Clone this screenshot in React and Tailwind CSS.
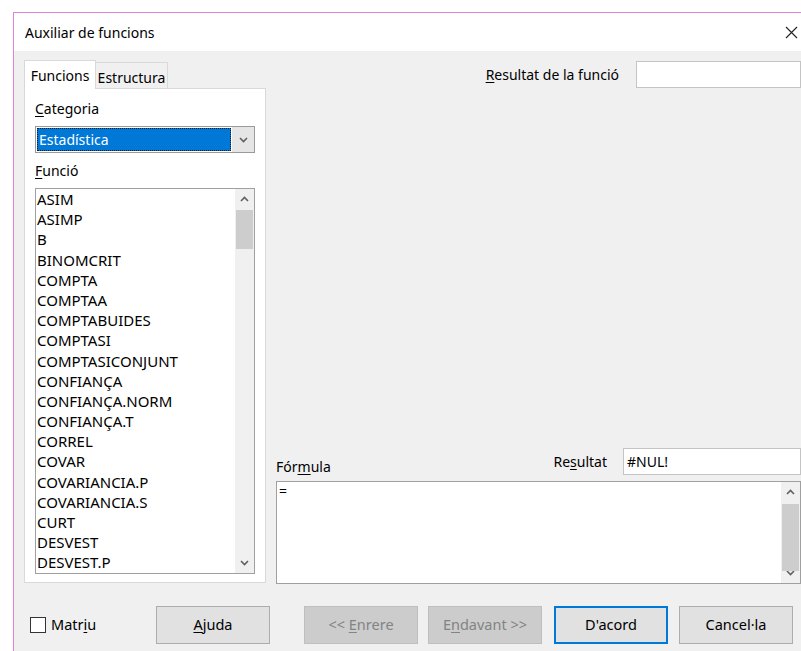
import React from "react";

const FONT = { fontFamily: '"Noto Sans", "Open Sans", "Liberation Sans", sans-serif' };

const functions = [
  "ASIM",
  "ASIMP",
  "B",
  "BINOMCRIT",
  "COMPTA",
  "COMPTAA",
  "COMPTABUIDES",
  "COMPTASI",
  "COMPTASICONJUNT",
  "CONFIANÇA",
  "CONFIANÇA.NORM",
  "CONFIANÇA.T",
  "CORREL",
  "COVAR",
  "COVARIANCIA.P",
  "COVARIANCIA.S",
  "CURT",
  "DESVEST",
  "DESVEST.P",
];

function Chevron({ up = false, className = "" }) {
  return (
    <svg width="9" height="6" viewBox="0 0 9 6" className={className}>
      <path
        d={up ? "M1 5 L4.5 1.5 L8 5" : "M1 1 L4.5 4.5 L8 1"}
        fill="none"
        stroke="#606060"
        strokeWidth="1.6"
      />
    </svg>
  );
}

function Mnemonic({ before = "", letter, after = "" }) {
  return (
    <span>
      {before}
      <span className="underline underline-offset-2">{letter}</span>
      {after}
    </span>
  );
}

function Scrollbar({ thumbTop, thumbHeight }) {
  return (
    <div className="relative flex h-full w-[19px] flex-col items-center justify-between bg-[#f0f0f0] py-[7px]">
      <Chevron up />
      <div
        className="absolute left-[1px] right-[1px] bg-[#cdcdcd]"
        style={{ top: thumbTop, height: thumbHeight }}
      />
      <Chevron />
    </div>
  );
}

function Button({ children, disabled = false, primary = false }) {
  const base = "flex h-[38px] w-[114px] shrink-0 items-center justify-center text-[14.5px]";
  if (disabled)
    return (
      <div className={`${base} border border-[#bfbfbf] bg-[#cccccc] text-[#838383]`}>{children}</div>
    );
  if (primary)
    return (
      <div className={`${base} border-2 border-[#0078d7] bg-[#e1e1e1] text-black`}>{children}</div>
    );
  return (
    <div className={`${base} border border-[#adadad] bg-[#e1e1e1] text-black`}>{children}</div>
  );
}

export default function App() {
  return (
    <div className="flex h-[651px] w-[801px] flex-col overflow-hidden bg-white text-black" style={FONT}>
      <div className="h-[12px] shrink-0 bg-white" />
      <div className="flex min-h-0 flex-1">
        <div className="w-[13px] shrink-0 bg-white" />
        <div className="flex min-w-0 flex-1 flex-col border-l border-t border-[#dc84dc]">
          {/* title bar */}
          <div className="flex h-[38px] shrink-0 items-center justify-between bg-white pl-[11px] pr-[3px]">
            <span className="text-[14px]">Auxiliar de funcions</span>
            <svg width="13" height="13" viewBox="0 0 13 13">
              <path d="M1 1 L12 12 M12 1 L1 12" stroke="#222" strokeWidth="1.1" />
            </svg>
          </div>

          {/* body */}
          <div className="flex flex-1 flex-col bg-[#f0f0f0] pl-[10px] pt-[10px]">
            <div className="flex h-[523px] gap-[10px]">
              {/* left column: tabs */}
              <div className="flex w-[242px] flex-col">
                <div className="flex h-[27px] items-end text-[14px]">
                  <div className="relative z-10 -mb-px flex h-[29px] w-[72px] items-center justify-center border border-b-0 border-[#d9d9d9] bg-white pt-[1px]">
                    Funcions
                  </div>
                  <div className="flex h-[26px] w-[72px] items-center justify-center border border-l-0 border-b-0 border-[#d9d9d9] bg-[#f0f0f0] pt-[3px]">
                    Estructura
                  </div>
                </div>
                <div className="flex h-[495px] flex-col border border-[#d9d9d9] bg-white px-[10px] pt-[10px]">
                  <div className="h-[20px] text-[14px] leading-[20px]">
                    <Mnemonic letter="C" after="ategoria" />
                  </div>
                  <div className="mt-[7px] flex h-[27px] border border-[#9a9a9a]">
                    <div className="m-px flex flex-1 items-center border border-dotted border-[#1a1a1a] bg-[#0078d7] pl-[1px] text-[14px] text-white">
                      Estadística
                    </div>
                    <div className="flex w-[22px] items-center justify-center bg-[#e5e5e5]">
                      <Chevron />
                    </div>
                  </div>
                  <div className="mt-[8px] h-[20px] text-[14px] leading-[20px]">
                    <Mnemonic letter="F" after="unció" />
                  </div>
                  <div className="mt-[7px] flex h-[386px] border border-[#a0a0a0] bg-white">
                    <div className="flex-1 overflow-hidden pl-[1px]">
                      {functions.map((f) => (
                        <div key={f} className="h-[20.2px] text-[15px] leading-[20.2px]">
                          {f}
                        </div>
                      ))}
                    </div>
                    <Scrollbar thumbTop={21} thumbHeight={39} />
                  </div>
                </div>
              </div>

              {/* right column */}
              <div className="flex min-w-0 flex-1 flex-col">
                <div className="flex h-[27px] items-center justify-end">
                  <span className="mr-[17px] text-[14px]">
                    <Mnemonic letter="R" after="esultat de la funció" />
                  </span>
                  <div className="h-[27px] w-[165px] shrink-0 border border-[#c4c4c4] bg-white" />
                </div>
                <div className="flex-1" />
                <div className="flex h-[34px] items-end">
                  <span className="mb-[4px] flex-1 text-[14px]">
                    <Mnemonic before="Fór" letter="m" after="ula" />
                  </span>
                  <div className="mt-[1px] flex items-center self-start">
                    <span className="mr-[16px] text-[14px]">
                      <Mnemonic before="Re" letter="s" after="ultat" />
                    </span>
                    <div className="flex h-[27px] w-[178px] shrink-0 items-center border border-[#c4c4c4] bg-white pl-[3px] text-[14px]">
                      #NUL!
                    </div>
                  </div>
                </div>
                <div className="flex h-[103px] border border-[#a0a0a0] bg-white">
                  <div className="flex-1 pl-[2px] text-[14px] leading-[18px]">=</div>
                  <Scrollbar thumbTop={22} thumbHeight={67} />
                </div>
              </div>
            </div>

            {/* bottom buttons */}
            <div className="mt-[22px] flex h-[38px] items-center">
              <div className="flex w-[132px] shrink-0 items-center pl-[6px]">
                <div className="h-[16px] w-[16px] border border-[#333] bg-white" />
                <span className="ml-[5px] text-[14.5px]">
                  <Mnemonic before="Matr" letter="i" after="u" />
                </span>
              </div>
              <Button>
                <Mnemonic letter="A" after="juda" />
              </Button>
              <div className="w-[34px] shrink-0" />
              <Button disabled>
                <Mnemonic before="<< " letter="E" after="nrere" />
              </Button>
              <div className="w-[10px] shrink-0" />
              <Button disabled>
                <Mnemonic before="E" letter="n" after="davant >>" />
              </Button>
              <div className="w-[12px] shrink-0" />
              <Button primary>D'acord</Button>
              <div className="w-[11px] shrink-0" />
              <Button>Cancel·la</Button>
            </div>
          </div>
        </div>
      </div>
    </div>
  );
}
